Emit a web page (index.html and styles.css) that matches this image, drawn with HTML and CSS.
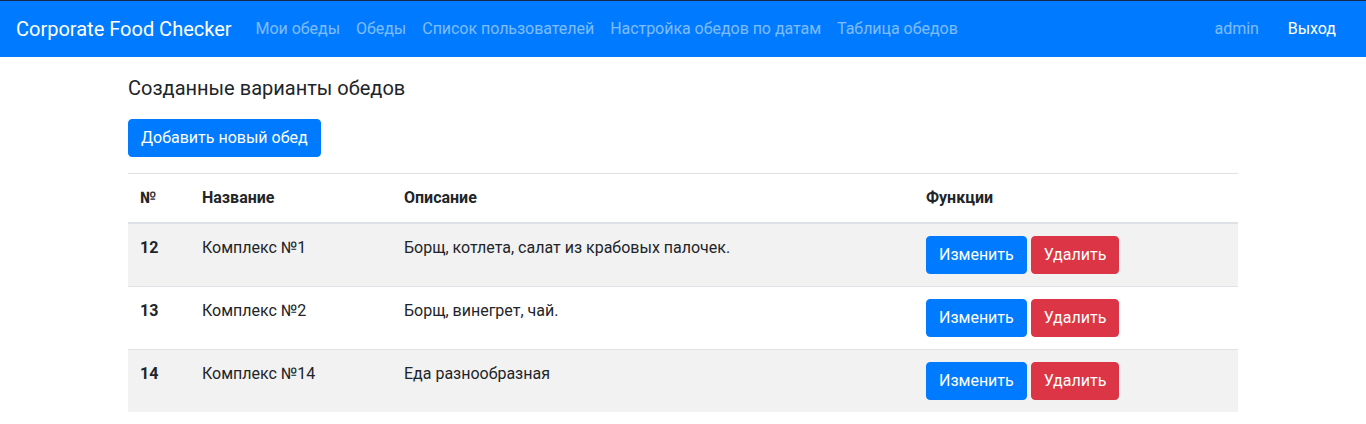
FILE: index.html
```html
<!DOCTYPE html>
<html lang="ru">
<head>
<meta charset="utf-8">
<title>Corporate Food Checker</title>
<link rel="stylesheet" href="styles.css">
</head>
<body>
<nav class="navbar">
  <a class="brand" href="#">Corporate Food Checker</a>
  <ul class="nav">
    <li><a class="nav-link" href="#">Мои обеды</a></li>
    <li><a class="nav-link" href="#">Обеды</a></li>
    <li><a class="nav-link" href="#">Список пользователей</a></li>
    <li><a class="nav-link" href="#">Настройка обедов по датам</a></li>
    <li><a class="nav-link" href="#">Таблица обедов</a></li>
  </ul>
  <ul class="nav nav-right">
    <li class="user-item"><span class="nav-link">admin</span></li>
    <li class="logout-item"><a class="nav-link active" href="#">Выход</a></li>
  </ul>
</nav>
<main class="container">
  <h5 class="title">Созданные варианты обедов</h5>
  <a class="btn btn-primary btn-add" href="#">Добавить новый обед</a>
  <table class="table">
    <thead>
      <tr>
        <th class="c1">№</th>
        <th class="c2">Название</th>
        <th class="c3">Описание</th>
        <th class="c4">Функции</th>
      </tr>
    </thead>
    <tbody>
      <tr class="odd">
        <th>12</th>
        <td>Комплекс №1</td>
        <td>Борщ, котлета, салат из крабовых палочек.</td>
        <td><a class="btn btn-primary" href="#">Изменить</a> <a class="btn btn-danger" href="#">Удалить</a></td>
      </tr>
      <tr>
        <th>13</th>
        <td>Комплекс №2</td>
        <td>Борщ, винегрет, чай.</td>
        <td><a class="btn btn-primary" href="#">Изменить</a> <a class="btn btn-danger" href="#">Удалить</a></td>
      </tr>
      <tr class="odd">
        <th>14</th>
        <td>Комплекс №14</td>
        <td>Еда разнообразная</td>
        <td><a class="btn btn-primary" href="#">Изменить</a> <a class="btn btn-danger" href="#">Удалить</a></td>
      </tr>
    </tbody>
  </table>
</main>
</body>
</html>
```
FILE: styles.css
```css
* { box-sizing: border-box; }
html, body { margin: 0; padding: 0; }
body {
  font-family: Roboto, "Liberation Sans", sans-serif;
  font-size: 16px;
  line-height: 1.5;
  color: #212529;
  background: #fff;
}
a { text-decoration: none; }

.navbar {
  display: flex;
  align-items: center;
  background: #007bff;
  border-top: 1px solid #16294a;
  padding: 8px 16px;
}
.brand {
  color: #fff;
  font-size: 20px;
  line-height: 30px;
  padding: 5px 0;
  margin-right: 16px;
}
.nav {
  display: flex;
  list-style: none;
  margin: 0;
  padding: 0;
}
.nav-right { margin-left: auto; margin-right: 6px; }
.nav-right .logout-item { margin-left: 13px; }
.nav-link {
  display: block;
  padding: 8px;
  color: rgba(255,255,255,.5);
  letter-spacing: -0.04px;
}
.nav-link.active { color: #fff; }

.container {
  width: 1140px;
  margin: 0 auto;
  padding: 19px 15px 0;
}
.title {
  font-size: 20px;
  font-weight: 400;
  line-height: 24px;
  margin: 0 0 19px;
}
.btn {
  display: inline-block;
  font-size: 16px;
  line-height: 24px;
  padding: 6px 12px;
  border: 1px solid transparent;
  border-radius: 4px;
  color: #fff;
  vertical-align: middle;
}
.btn-primary { background: #007bff; border-color: #007bff; }
.btn-danger { background: #dc3545; border-color: #dc3545; }
.btn-add { margin-bottom: 16px; }

.table {
  width: 100%;
  border-collapse: collapse;
  table-layout: fixed;
}
.table th, .table td {
  padding: 12px;
  text-align: left;
  vertical-align: top;
  border-top: 1px solid #dee2e6;
}
.table th { font-weight: 700; }
.table thead th {
  vertical-align: bottom;
  border-bottom: 2px solid #dee2e6;
}
.table tr.odd { background: rgba(0,0,0,.05); }
.c1 { width: 62px; }
.c2 { width: 202px; }
.c3 { width: 522px; }
.c4 { width: 324px; }
```
